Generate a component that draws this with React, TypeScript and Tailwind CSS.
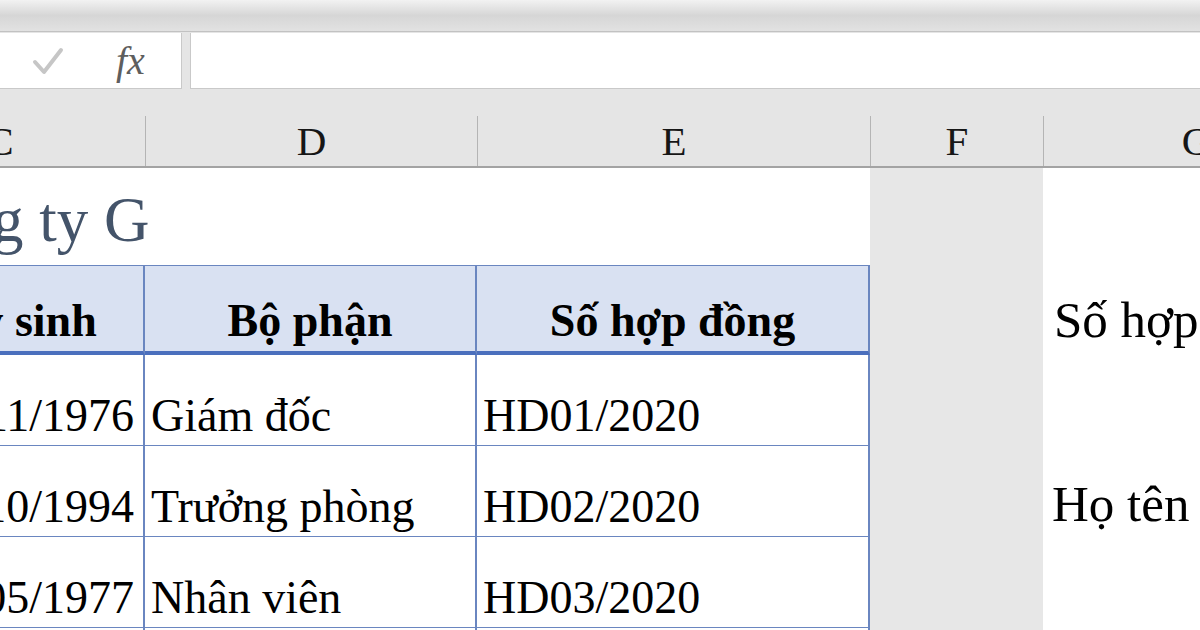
import React from "react";

type Row = {
  date: string;
  dept: string;
  contract: string;
  note?: string;
};

const rows: Row[] = [
  { date: "12/11/1976", dept: "Giám đốc", contract: "HD01/2020" },
  { date: "15/10/1994", dept: "Trưởng phòng", contract: "HD02/2020", note: "Họ tên nhân viên" },
  { date: "20/05/1977", dept: "Nhân viên", contract: "HD03/2020" },
];

const serif = { fontFamily: '"Liberation Serif", "Times New Roman", serif' };

function FormulaBar() {
  return (
    <div className="flex h-[58px] items-stretch gap-[8px] border-t border-[#c2c2c2] bg-[#e5e5e5] pt-px">
      <div className="flex w-[182px] items-center border-b border-r border-[#c9c9c9] bg-white">
        <svg className="ml-[32px]" width="32" height="30" viewBox="0 0 32 30">
          <polyline
            points="3,16 12,26 29,4"
            fill="none"
            stroke="#c6c6c6"
            strokeWidth="4"
            strokeLinecap="round"
            strokeLinejoin="round"
          />
        </svg>
        <span className="ml-[52px] text-[40px] italic leading-none text-[#5e5e5e]" style={serif}>
          fx
        </span>
      </div>
      <div className="flex-1 border-b border-l border-[#c9c9c9] bg-white" />
    </div>
  );
}

function ColumnHeaders() {
  const letter = "text-[41px] leading-none text-[#161616]";
  return (
    <div className="flex h-[79px] items-end bg-[#e5e5e5]">
      <div className="-ml-[145px] flex h-[52px] w-[1494px] border-b-2 border-[#a3a3a3]" style={serif}>
        <div className={`flex w-[290px] items-center justify-center ${letter}`}>C</div>
        <div className={`flex w-[332px] items-center justify-center border-l border-[#b4b4b4] ${letter}`}>D</div>
        <div className={`flex w-[393px] items-center justify-center border-l border-[#b4b4b4] ${letter}`}>E</div>
        <div className={`flex w-[173px] items-center justify-center border-l border-[#b4b4b4] ${letter}`}>F</div>
        <div className={`flex w-[306px] items-center justify-center border-l border-[#b4b4b4] ${letter}`}>G</div>
      </div>
    </div>
  );
}

function Sheet() {
  const cell = "flex shrink-0 overflow-hidden whitespace-nowrap";
  const head =
    "items-end justify-center border-t border-r-2 border-t-[#6a86c0] border-r-[#6a86c0] border-b-4 border-b-[#4a6fbd] bg-[#d9e1f2] pb-[7px] font-bold";
  return (
    <div className="-ml-[145px] flex w-[1494px] flex-col text-black" style={serif}>
      {/* title row */}
      <div className="flex h-[97px]">
        <div className="w-[290px] shrink-0 overflow-visible whitespace-nowrap pl-[32px] pt-[21px] text-[63px] leading-none text-[#44546a]">
          Công ty G
        </div>
        <div className="w-[332px] shrink-0" />
        <div className="w-[393px] shrink-0" />
        <div className="w-[173px] shrink-0 bg-[#e7e7e7]" />
        <div className="w-[306px] shrink-0" />
      </div>

      {/* header row */}
      <div className="flex h-[90px] text-[46px] leading-none">
        <div className={`${cell} w-[290px] ${head}`}>Ngày sinh</div>
        <div className={`${cell} w-[332px] ${head}`}>Bộ phận</div>
        <div className={`${cell} w-[393px] ${head}`}>Số hợp đồng</div>
        <div className="w-[173px] shrink-0 bg-[#e7e7e7]" />
        <div className={`${cell} w-[306px] items-end pb-[9px] pl-[11px] text-[51px]`}>Số hợp đồng</div>
      </div>

      {/* data rows */}
      {rows.map((r) => (
        <div key={r.contract} className="flex h-[91px] text-[46px] leading-none">
          <div className={`${cell} w-[290px] items-end justify-end border-b border-r-2 border-[#6a86c0] pb-[6px] pr-[9px]`}>
            {r.date}
          </div>
          <div className={`${cell} w-[332px] items-end border-b border-r-2 border-[#6a86c0] pb-[6px] pl-[6px]`}>
            {r.dept}
          </div>
          <div className={`${cell} w-[393px] items-end border-b border-r-2 border-[#6a86c0] pb-[6px] pl-[6px]`}>
            {r.contract}
          </div>
          <div className="w-[173px] shrink-0 bg-[#e7e7e7]" />
          <div className={`${cell} w-[306px] items-end pb-[7px] pl-[9px] text-[51px]`}>{r.note ?? ""}</div>
        </div>
      ))}

      <div className="flex h-[40px]">
        <div className="w-[290px] shrink-0 border-r-2 border-[#6a86c0]" />
        <div className="w-[332px] shrink-0 border-r-2 border-[#6a86c0]" />
        <div className="w-[393px] shrink-0 border-r-2 border-[#6a86c0]" />
        <div className="w-[173px] shrink-0 bg-[#e7e7e7]" />
      </div>
    </div>
  );
}

export default function App() {
  return (
    <div className="h-[630px] w-[1200px] overflow-hidden bg-white">
      <div className="h-[31px] bg-gradient-to-b from-[#f2f2f2] via-[#d6d6d6] to-[#e2e2e2]" />
      <FormulaBar />
      <ColumnHeaders />
      <Sheet />
    </div>
  );
}
